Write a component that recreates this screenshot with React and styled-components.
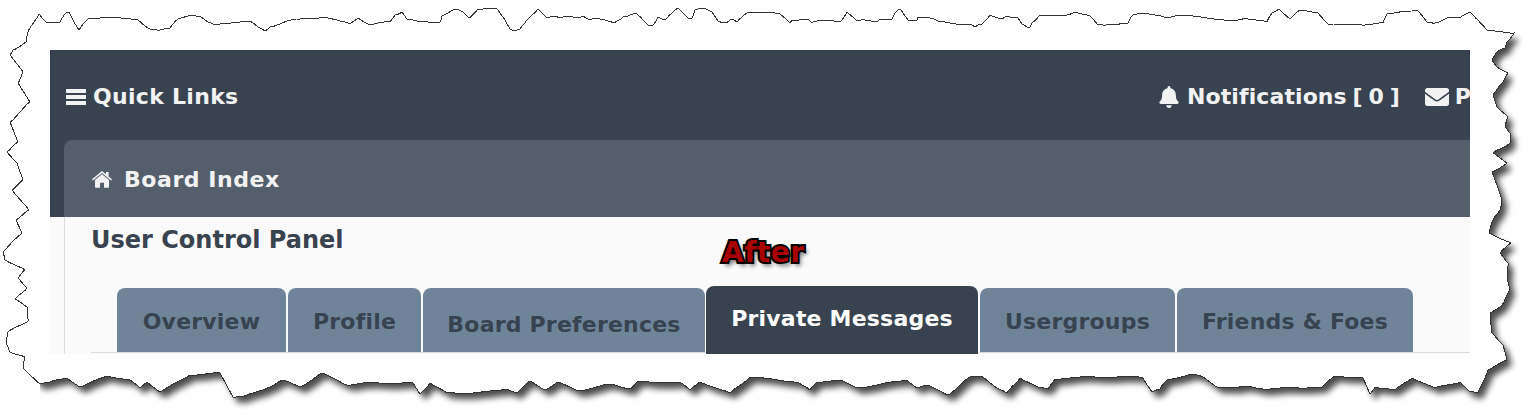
import React from "react"
import styled, { createGlobalStyle } from "styled-components"
import { FaBell, FaEnvelope } from "react-icons/fa"

const TORN_EDGE = [
  [39,14],[46,22],[52,23],[60,22],[66,13],[69,12],[74,22],[79,30],[85,22],[90,18],[95,19],[104,17],[115,17],[125,19],[138,20],[145,26],[150,29],[160,30],[170,28],[178,19],[190,15],[200,16],[208,22],[215,25],[235,22],[250,21],[258,27],[265,31],[270,27],[287,21],[300,19],[325,17],[340,21],[350,24],[358,18],[370,25],[378,23],
  [390,22],[395,15],[402,12],[407,19],[420,22],[428,22],[433,23],[440,22],[442,16],[448,13],[456,9],[463,12],[469,18],[478,9],[497,9],[505,20],[510,29],[514,31],[520,29],[525,23],[532,15],[538,9],[547,18],[553,16],[560,18],[570,16],[577,18],[583,16],[591,20],[593,18],[608,21],[614,23],[623,17],[636,13],[648,25],[653,25],[658,17],[665,20],[678,8],[688,18],[692,18],[695,10],[703,8],[712,12],[718,21],[725,23],[732,19],[737,22],[747,13],[767,12],
  [780,14],[790,23],[792,20],[808,19],[812,23],[813,22],[828,20],[840,22],[847,12],[857,21],[865,20],[877,22],[880,19],[892,19],[895,13],[900,9],[908,20],[917,20],[918,17],[930,18],[938,21],[953,23],[962,25],[970,24],[975,27],[982,24],[990,15],[1002,19],[1005,17],[1018,18],[1022,24],[1029,28],[1032,23],[1039,16],[1063,16],[1075,12],[1090,16],[1098,25],[1103,25],[1128,23],[1133,15],
  [1145,13],[1158,15],[1168,18],[1182,15],[1198,16],[1218,20],[1232,21],[1245,18],[1267,22],[1272,13],[1279,9],[1290,19],[1300,10],[1307,11],[1318,13],[1328,24],[1342,25],[1357,24],[1365,25],[1383,23],[1387,14],[1402,11],[1418,11],[1427,22],[1435,23],[1447,18],[1460,18],[1470,12],[1478,20],[1488,31],[1514,33],
  [1507,42],[1505,48],[1497,52],[1492,60],[1497,67],[1508,73],[1503,82],[1493,95],[1497,107],[1508,117],[1505,127],[1510,133],[1510,143],[1493,153],[1507,163],[1492,172],[1497,185],[1502,200],[1500,210],[1493,220],[1489,233],[1511,243],[1500,253],[1508,263],[1507,277],[1510,290],[1502,305],[1490,313],[1492,333],[1503,345],[1507,360],[1488,370],[1478,393],[1470,392],[1460,382],[1435,388],[1412,378],[1395,390],[1375,387],[1370,394],[1363,378],[1335,376],[1322,387],
  [1263,389],[1247,386],[1237,388],[1217,387],[1203,377],[1192,374],[1167,380],[1160,389],[1152,392],[1142,377],[1080,377],[1055,379],[1048,389],[1040,388],[1020,378],[1007,393],[997,388],[983,377],[970,377],[948,395],[927,385],[917,388],[907,380],[857,388],[840,380],[817,382],[810,390],[797,382],[750,377],[730,393],[700,382],[690,390],[680,382],
  [653,383],[638,381],[630,389],[610,384],[578,391],[558,382],[545,390],[530,381],[517,393],[507,389],[487,392],[468,393],[447,393],[430,383],[420,394],[413,383],[398,383],[367,383],[347,385],[333,378],[322,373],[300,387],[283,380],[267,388],[243,397],[233,397],[220,373],[190,375],[160,392],[147,382],[140,388],[130,380],[107,376],[80,387],[67,378],[50,382],[40,384],[23,368],[25,357],[10,352],[6,343],[8,332],[28,321],[27,307],[15,299],[27,288],[18,278],[25,270],[5,260],[3,252],[22,233],[16,220],[29,210],[12,190],[23,180],[17,163],[7,152],[18,142],[10,122],[30,102],[18,83],[23,72],[10,55],[13,50],[26,42],[28,32],
]

// break each long stretch of the edge into small wobbly steps
const roughen = (points) => {
  const out = []
  let n = 0
  points.forEach(([x, y], i) => {
    const [nx, ny] = points[(i + 1) % points.length]
    const steps = Math.max(1, Math.round(Math.hypot(nx - x, ny - y) / 3))
    for (let s = 0; s < steps; s++) {
      n += 1
      const t = s / steps
      const wobble = s === 0 ? 0 : Math.sin(n * 12.9898) * 0.5
      out.push(`${(x + (nx - x) * t + wobble * 0.5).toFixed(1)},${(y + (ny - y) * t + wobble).toFixed(1)}`)
    }
  })
  return out.join(" ")
}

const EDGE_POINTS = roughen(TORN_EDGE)

const TABS = [
  { label: "Overview", width: 169 },
  { label: "Profile", width: 133 },
  { label: "Board Preferences", width: 282, shift: 3 },
  { label: "Private Messages", width: 272, active: true },
  { label: "Usergroups", width: 195 },
  { label: "Friends & Foes", width: 236 },
]

const App = () => {
  return (
    <Page>
      <GlobalStyle />
      <Paper viewBox="0 0 1535 419">
        <defs>
          <filter id="paperBlur" x="-5%" y="-5%" width="110%" height="110%">
            <feGaussianBlur stdDeviation="3" />
          </filter>
          {/* the shadow only falls along the bottom and the right */}
          <clipPath id="shadowZone">
            <rect x="40" y="34" width="1495" height="385" />
          </clipPath>
        </defs>
        <g clipPath="url(#shadowZone)">
          <polygon points={EDGE_POINTS} transform="translate(5 6)" fill="#000" opacity="0.7" filter="url(#paperBlur)" />
        </g>
        <polygon points={EDGE_POINTS} fill="#fff" stroke="#333" strokeWidth="1" shapeRendering="crispEdges" />
      </Paper>
      <Frame>
        <NavBar>
          <NavLink>
            <BarsIcon viewBox="0 0 20 16">
              <rect width="20" height="4" />
              <rect y="6" width="20" height="4" />
              <rect y="12" width="20" height="4" />
            </BarsIcon>
            Quick Links
          </NavLink>
          <NavRight>
            <NotifyLink>
              <FaBell size={22} />
              Notifications [ 0 ]
            </NotifyLink>
            <MailLink>
              <FaEnvelope size={24} />P
            </MailLink>
          </NavRight>
        </NavBar>
        <CrumbBand>
          <Crumb>
            <HomeIcon viewBox="0 0 20 17">
              <path d="M10 3.2 3 9v7a.8.8 0 0 0 .8.8H8v-5h4v5h4.2a.8.8 0 0 0 .8-.8V9z" />
              <path d="M10 0 0 8.3l1 1.2L10 2l9 7.5 1-1.2-3.4-2.8V1h-2.6v2.3z" />
            </HomeIcon>
            Board Index
          </Crumb>
        </CrumbBand>
        <Content>
          <Inner>
            <Title>User Control Panel</Title>
            <TabRow>
              {TABS.map((tab) => (
                <Tab key={tab.label} $active={tab.active} $width={tab.width} $shift={tab.shift}>
                  {tab.label}
                </Tab>
              ))}
            </TabRow>
          </Inner>
        </Content>
      </Frame>
      <AfterLabel>After</AfterLabel>
    </Page>
  )
}

export default App

const GlobalStyle = createGlobalStyle`
  html, body {
    margin: 0;
    background: #fff;
  }
`

const Page = styled.div`
  position: relative;
  width: 1535px;
  height: 419px;
  overflow: hidden;
  padding: 50px 65px 0 50px;
  box-sizing: border-box;
  font-family: "DejaVu Sans", Verdana, sans-serif;
  font-weight: 700;
`

const Paper = styled.svg`
  position: absolute;
  top: 0;
  left: 0;
  width: 1535px;
  height: 419px;
`

const Frame = styled.div`
  position: relative;
  width: 1420px;
  height: 304px;
  overflow: hidden;
  display: flex;
  flex-direction: column;
`

const NavBar = styled.div`
  height: 90px;
  box-sizing: border-box;
  flex-shrink: 0;
  background: #38434f;
  color: #f2f2f2;
  padding: 3px 0 0 16px;
  display: flex;
  align-items: center;
  justify-content: space-between;
`

const NavRight = styled.div`
  width: 312px;
  flex-shrink: 0;
  display: flex;
  gap: 25px;
  white-space: nowrap;
`

const NavLink = styled.div`
  display: flex;
  align-items: center;
  gap: 7px;
  font-size: 22px;
  letter-spacing: 0.3px;
  flex-shrink: 0;
`

const NotifyLink = styled(NavLink)`
  letter-spacing: 0.1px;
  word-spacing: -2px;
`

const MailLink = styled(NavLink)`
  gap: 6px;
  letter-spacing: 0;
`

const BarsIcon = styled.svg`
  width: 20px;
  height: 16px;
  fill: #f2f2f2;
`

const CrumbBand = styled.div`
  background: #38434f;
  padding-left: 14px;
  flex-shrink: 0;
`

const Crumb = styled.div`
  height: 77px;
  box-sizing: border-box;
  padding: 1px 0 0 28px;
  background: #555f6b;
  border-top-left-radius: 8px;
  color: #f2f2f2;
  font-size: 22px;
  letter-spacing: 0.55px;
  display: flex;
  align-items: center;
  gap: 12px;
`

const HomeIcon = styled.svg`
  width: 20px;
  height: 17px;
  fill: #f2f2f2;
`

const Content = styled.div`
  flex: 1;
  background: #fafafa;
  padding-left: 14px;
  display: flex;
`

const Inner = styled.div`
  flex: 1;
  border-left: 1px solid #dcdcdc;
  padding-left: 26px;
  display: flex;
  flex-direction: column;
`

const Title = styled.h2`
  margin: 8px 0 0;
  font-size: 24px;
  line-height: 30px;
  color: #38434f;
`

const TabRow = styled.div`
  margin-top: auto;
  margin-bottom: 1px;
  padding-left: 26px;
  height: 64px;
  border-bottom: 1px solid #dcdcdc;
  display: flex;
  align-items: flex-end;
  gap: 2px;
`

const Tab = styled.div`
  width: ${(p) => p.$width}px;
  height: ${(p) => (p.$active ? "68px" : "64px")};
  margin: ${(p) => (p.$active ? "0 0 -2px -1px" : "0")};
  padding-top: ${(p) => (p.$active ? 0 : p.$shift ? p.$shift * 2 + 2 : 2)}px;
  padding-bottom: ${(p) => (p.$active ? 4 : 0)}px;
  box-sizing: border-box;
  border-radius: 8px 8px 0 0;
  background: ${(p) => (p.$active ? "#38434f" : "#6f8499")};
  color: ${(p) => (p.$active ? "#fff" : "#38434f")};
  font-size: 22px;
  letter-spacing: 0.2px;
  white-space: nowrap;
  display: flex;
  align-items: center;
  justify-content: center;
`

const AfterLabel = styled.div`
  position: absolute;
  left: 722px;
  top: 236px;
  font-size: 28px;
  line-height: 34px;
  letter-spacing: 0.5px;
  color: #a80000;
  -webkit-text-stroke: 4px #000;
  paint-order: stroke fill;
  text-shadow: 3px 4px 4px rgba(0, 0, 0, 0.55);
`
